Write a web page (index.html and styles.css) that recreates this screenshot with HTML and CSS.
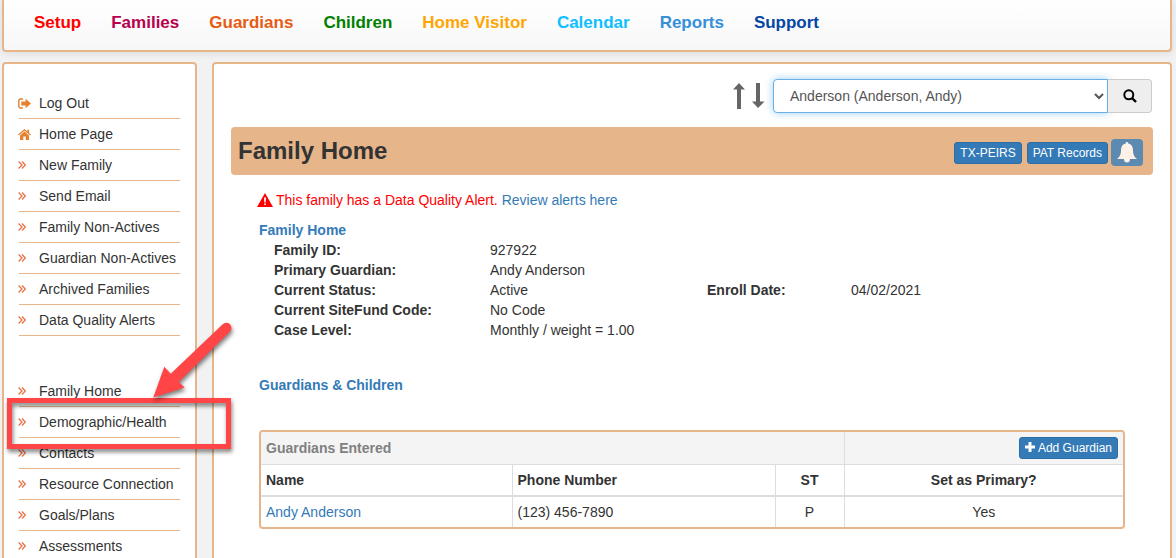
FILE: index.html
```html
<!DOCTYPE html>
<html lang="en">
<head>
  <meta charset="UTF-8" />
  <meta name="viewport" content="width=device-width, initial-scale=1.0" />
  <title>Family Home</title>
  <link rel="stylesheet" href="styles.css">
</head>
<body>
  <!-- shared icon shapes -->
  <svg class="sprite" aria-hidden="true">
    <symbol id="icon-chevrons" viewBox="0 0 8 8"><path d="M.6 .5 4 4 .6 7.500M4 .5 7.400 4 4 7.500" fill="none" stroke="currentColor" stroke-width="1.300"/></symbol>
    <symbol id="icon-logout" viewBox="0 0 13 11"><path d="M5 1H2.500A1.700 1.700 0 0 0 .8 2.700v5.600A1.700 1.700 0 0 0 2.500 10H5" fill="none" stroke="currentColor" stroke-width="1.400"/><path d="M3.300 3.400h4.300V.8L13 5.500 7.600 10.200V7.600H3.300z" fill="currentColor"/></symbol>
    <symbol id="icon-home" viewBox="0 0 13 11"><path d="M6.500 0 9.300 2.400V.8h1.800v3.100L13 5.500l-.8.9L6.500 1.700.8 6.400 0 5.500z" fill="currentColor"/><path d="M6.500 2.600 11 6.400V11H7.700V7.600H5.300V11H2V6.400z" fill="currentColor"/></symbol>
  </svg>

  <header class="topbar">
    <nav class="topnav">
      <a class="setup" href="#">Setup</a>
      <a class="families" href="#">Families</a>
      <a class="guardians" href="#">Guardians</a>
      <a class="children" href="#">Children</a>
      <a class="visitor" href="#">Home Visitor</a>
      <a class="calendar" href="#">Calendar</a>
      <a class="reports" href="#">Reports</a>
      <a class="support" href="#">Support</a>
    </nav>
  </header>

  <div class="layout">
    <aside class="sidebar">
      <ul class="menu">
        <li><a href="#"><svg class="wide"><use href="#icon-logout"/></svg>Log Out</a></li>
        <li><a href="#"><svg class="wide"><use href="#icon-home"/></svg>Home Page</a></li>
        <li><a href="#"><svg><use href="#icon-chevrons"/></svg>New Family</a></li>
        <li><a href="#"><svg><use href="#icon-chevrons"/></svg>Send Email</a></li>
        <li><a href="#"><svg><use href="#icon-chevrons"/></svg>Family Non-Actives</a></li>
        <li><a href="#"><svg><use href="#icon-chevrons"/></svg>Guardian Non-Actives</a></li>
        <li><a href="#"><svg><use href="#icon-chevrons"/></svg>Archived Families</a></li>
        <li><a href="#"><svg><use href="#icon-chevrons"/></svg>Data Quality Alerts</a></li>
      </ul>
      <ul class="menu">
        <li><a href="#"><svg><use href="#icon-chevrons"/></svg>Family Home</a></li>
        <li class="marked">
          <a href="#"><svg><use href="#icon-chevrons"/></svg>Demographic/Health</a>
          <div class="mark-box"></div>
          <svg class="mark-arrow" viewBox="0 0 100 95"><path d="M82.700 9.300a4.800 4.800 0 0 1 7.300 7.200L38.700 67 44.700 72.500 13.300 82.500 24.300 51.700 30.700 58.700z" fill="#ff4545"/></svg>
        </li>
        <li><a href="#"><svg><use href="#icon-chevrons"/></svg>Contacts</a></li>
        <li><a href="#"><svg><use href="#icon-chevrons"/></svg>Resource Connection</a></li>
        <li><a href="#"><svg><use href="#icon-chevrons"/></svg>Goals/Plans</a></li>
        <li><a href="#"><svg><use href="#icon-chevrons"/></svg>Assessments</a></li>
      </ul>
    </aside>

    <main class="content">
      <form class="search">
        <svg class="sort" viewBox="0 0 32 26"><path d="M6 0 12 6.500H8V26H4V6.500H0zM23 0h4v18.500h4.500L25 25l-6-6.500h4z" fill="#666"/></svg>
        <select aria-label="Family">
          <option>Anderson (Anderson, Andy)</option>
        </select>
        <button type="button" aria-label="Search">
          <svg viewBox="0 0 14 14"><circle cx="5.800" cy="5.800" r="4.500" fill="none" stroke="#000" stroke-width="2"/><path d="M9 9l4 4" stroke="#000" stroke-width="2.400"/></svg>
        </button>
      </form>

      <div class="title-bar">
        <h1>Family Home</h1>
        <div class="actions">
          <button type="button" class="btn">TX-PEIRS</button>
          <button type="button" class="btn">PAT Records</button>
          <button type="button" class="bell" aria-label="Alerts">
            <svg viewBox="0 0 20 21"><path d="M10 0c.9 0 1.300.6 1.300 1.500C14.500 2.200 16 4.800 16 8c0 5 1.500 7 4 9H0c2.500-2 4-4 4-9 0-3.200 1.500-5.800 4.700-6.500C8.700.6 9.100 0 10 0zM7 17h6a3 3.500 0 0 1-6 0z" fill="#fdf1e8"/></svg>
          </button>
        </div>
      </div>

      <div class="family">
        <p class="alert">
          <svg viewBox="0 0 16 14"><path d="M8 0 16 14H0z" fill="#f00"/><path d="M7 4.500h2L8.700 9.500H7.300zM7.200 10.500h1.600v1.600H7.200z" fill="#fff"/></svg>
          <span>This family has a Data Quality Alert. <a href="#">Review alerts here</a></span>
        </p>

        <h2>Family Home</h2>
        <dl class="details">
          <dt>Family ID:</dt><dd>927922</dd>
          <dt>Primary Guardian:</dt><dd>Andy Anderson</dd>
          <dt>Current Status:</dt><dd>Active</dd>
          <dt class="second">Enroll Date:</dt><dd>04/02/2021</dd>
          <dt>Current SiteFund Code:</dt><dd>No Code</dd>
          <dt>Case Level:</dt><dd>Monthly / weight = 1.00</dd>
        </dl>

        <h2>Guardians &amp; Children</h2>
        <div class="table-box">
          <table>
            <colgroup>
              <col class="col-name"><col class="col-phone"><col class="col-st"><col>
            </colgroup>
            <thead>
              <tr class="caption-row">
                <th colspan="3">Guardians Entered</th>
                <th class="action"><button type="button" class="btn"><svg viewBox="0 0 10 10"><path d="M3.500 0h3v3.500H10v3H6.500V10h-3V6.500H0v-3h3.500z" fill="#fff"/></svg>Add Guardian</button></th>
              </tr>
              <tr>
                <th>Name</th>
                <th>Phone Number</th>
                <th class="center">ST</th>
                <th class="center">Set as Primary?</th>
              </tr>
            </thead>
            <tbody>
              <tr>
                <td><a href="#">Andy Anderson</a></td>
                <td>(123) 456-7890</td>
                <td class="center">P</td>
                <td class="center">Yes</td>
              </tr>
            </tbody>
          </table>
        </div>
      </div>
    </main>
  </div>
</body>
</html>
```
FILE: styles.css
```css
* {
  box-sizing: border-box;
}
body {
  font-family: "Liberation Sans", Arial, sans-serif;
  font-size: 14px;
  line-height: 20px;
  color: #333;
  background: #f2f2f2;
  margin: 0;
  padding: 0 4px 0 2px;
}
a {
  color: #337ab7;
  text-decoration: none;
}
button, select {
  font-family: inherit;
}
.sprite {
  display: none;
}

/* top navigation */
.topbar {
  background: linear-gradient(#fff, #f7f7f7);
  border: 2px solid #e6b58a;
  border-top: none;
  border-radius: 0 0 4px 4px;
  box-shadow: 0 1px 8px rgba(0,0,0,0.1);
  padding: 13px 30px 17px;
}
.topnav {
  display: flex;
  gap: 30px;
}
.topnav a {
  font-size: 17px;
  font-weight: bold;
}
.topnav .setup { color: #f00; }
.topnav .families { color: #b8004e; }
.topnav .guardians { color: #e65c14; }
.topnav .children { color: #008000; }
.topnav .visitor { color: #ffa500; }
.topnav .calendar { color: #0fbfff; }
.topnav .reports { color: #3590d9; }
.topnav .support { color: #0446a5; }

.layout {
  display: grid;
  grid-template-columns: 195px 1fr;
  gap: 15px;
  margin-top: 10px;
}
.sidebar, .content {
  background: #fff;
  border: 2px solid #e6b58a;
  border-radius: 4px;
}

/* side menu */
.sidebar {
  padding: 24px 15px;
}
.menu {
  list-style: none;
  margin: 0 0 40px;
  padding: 0;
}
.menu li {
  position: relative;
}
.menu a {
  display: flex;
  align-items: center;
  height: 31px;
  padding-left: 20px;
  color: #333;
  border-bottom: 1px solid #e6b58a;
  white-space: nowrap;
}
.menu a svg {
  width: 8px;
  height: 8px;
  margin-left: -21px;
  margin-right: 13px;
  color: #e57347;
}
.menu a svg.wide {
  width: 13px;
  height: 11px;
  margin-right: 8px;
  color: #e5822f;
}
.mark-box {
  position: absolute;
  z-index: 1;
  top: -9px;
  left: -12px;
  width: 224px;
  height: 51px;
  border: 5px solid #ff4545;
  filter: drop-shadow(1px 3px 2px rgba(0,0,0,0.5));
  pointer-events: none;
}
.mark-arrow {
  position: absolute;
  z-index: 2;
  top: -92px;
  left: 121px;
  width: 100px;
  height: 95px;
  filter: drop-shadow(1px 3px 2px rgba(0,0,0,0.5));
  pointer-events: none;
}

/* family picker */
.content {
  padding: 15px 17px;
}
.search {
  display: flex;
  justify-content: flex-end;
  align-items: center;
  margin-right: 1px;
}
.sort {
  width: 32px;
  height: 26px;
  margin-right: 8px;
}
.search select {
  width: 335px;
  height: 34px;
  padding: 6px 0 6px 12px;
  font-size: 14px;
  color: #555;
  background: #fff;
  border: 1px solid #66afe9;
  border-radius: 4px 0 0 4px;
  box-shadow: 0 0 8px rgba(102,175,233,0.6);
}
.search button {
  display: flex;
  align-items: center;
  justify-content: center;
  width: 44px;
  height: 34px;
  padding: 0;
  background: #eee;
  border: 1px solid #ccc;
  border-left: none;
  border-radius: 0 4px 4px 0;
}
.search button svg {
  width: 14px;
  height: 14px;
}

.title-bar {
  display: flex;
  align-items: center;
  justify-content: space-between;
  height: 48px;
  margin-top: 14px;
  padding: 0 10px 0 7px;
  background: #e6b58a;
  border-radius: 4px;
}
.title-bar h1 {
  margin: 0;
  font-size: 24px;
}
.actions {
  display: flex;
  align-items: center;
  gap: 5px;
  padding-top: 3px;
}
.btn {
  height: 22px;
  padding: 0 5px;
  font-size: 12px;
  line-height: 18px;
  color: #fff;
  background: #337ab7;
  border: 1px solid #2e6da4;
  border-radius: 3px;
}
.bell {
  display: flex;
  align-items: center;
  justify-content: center;
  width: 32px;
  height: 27px;
  margin-left: -2px;
  padding: 0;
  background: #5c8ab1;
  border: none;
  border-radius: 4px;
}
.bell svg {
  width: 20px;
  height: 21px;
}

/* family details */
.family {
  padding: 15px 28px;
}
.alert {
  display: flex;
  align-items: center;
  gap: 3px;
  margin: 0 0 10px -2px;
  color: #f00;
}
.alert svg {
  width: 16px;
  height: 14px;
}
.family h2 {
  margin: 0;
  font-size: 14px;
  line-height: 20px;
  color: #337ab7;
}
.details {
  display: grid;
  grid-template-columns: 216px 217px 144px 1fr;
  margin: 0 0 35px;
  padding-left: 15px;
}
.details dt {
  grid-column: 1;
  font-weight: bold;
}
.details dt.second {
  grid-column: 3;
}
.details dd {
  margin: 0;
}

.table-box {
  margin-top: 35px;
  border: 2px solid #e6b58a;
  border-radius: 4px;
  overflow: hidden;
}
table {
  width: 100%;
  table-layout: fixed;
  border-collapse: collapse;
}
.col-name { width: 251px; }
.col-phone { width: 263px; }
.col-st { width: 69px; }
th, td {
  height: 31px;
  padding: 5px;
  text-align: left;
  border-left: 1px solid #ddd;
}
th:first-child, td:first-child {
  border-left: none;
}
thead th {
  border-bottom: 2px solid #ddd;
}
.caption-row th {
  color: #808080;
  background: #f4f4f4;
  border-bottom: 1px solid #ddd;
}
th.center, td.center {
  text-align: center;
}
th.action {
  text-align: right;
}
.action svg {
  width: 10px;
  height: 10px;
  margin-right: 3px;
}
```
